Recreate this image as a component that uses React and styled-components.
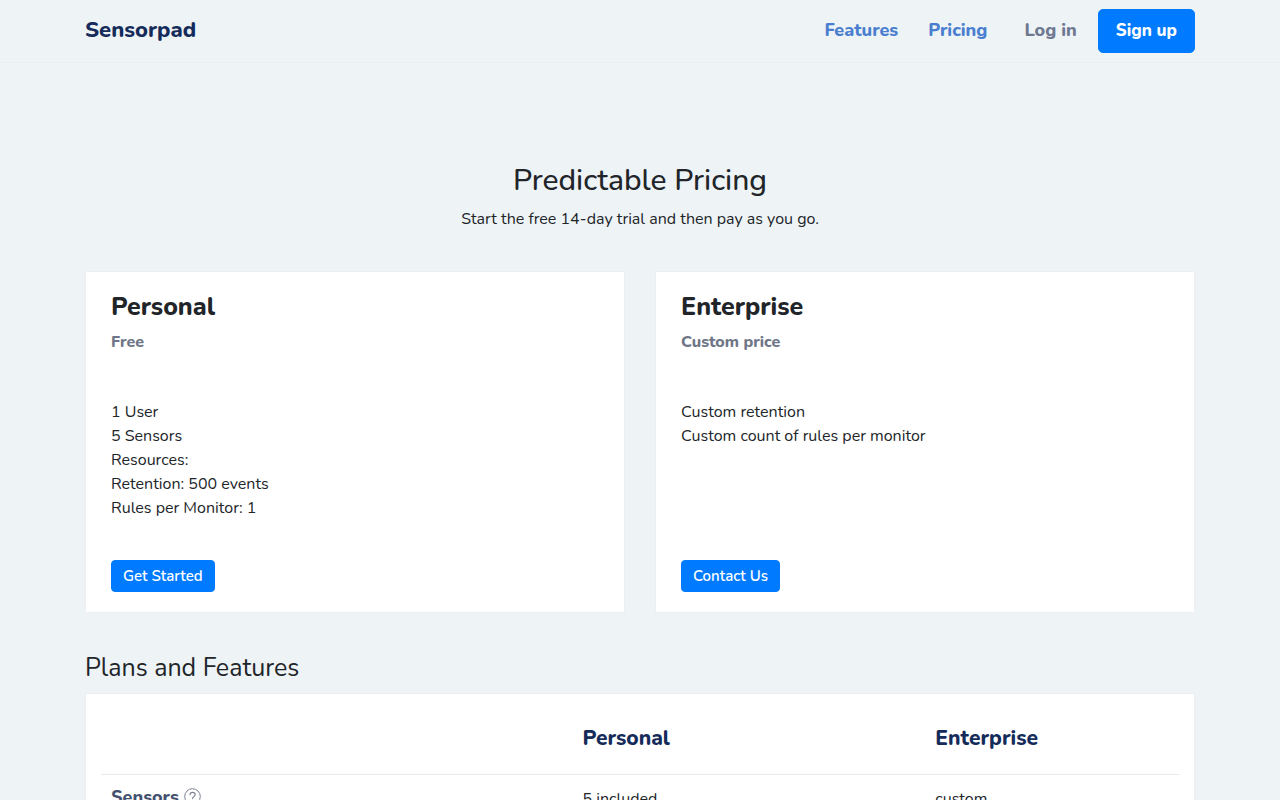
import styled, { createGlobalStyle } from "styled-components";

const GlobalStyle = createGlobalStyle`
  *,
  *::before,
  *::after {
    box-sizing: border-box;
  }
  body {
    margin: 0;
    background-color: #eef3f6;
    color: #212529;
    font-family: Nunito, Lato, "Open Sans", sans-serif;
    font-size: 16px;
    font-weight: 400;
    line-height: 24px;
  }
`;

const Container = styled.div`
  width: 100%;
  max-width: 1140px;
  margin: 0 auto;
  padding: 0 15px;
`;
const Header = styled.header`
  border-bottom: 1px solid #ebeff2;
`;
const Bar = styled(Container)`
  display: flex;
  align-items: center;
  justify-content: space-between;
  min-height: 62px;
`;
const Brand = styled.a`
  color: #152c5b;
  font-size: 22px;
  font-weight: 800;
  line-height: 32px;
  padding-bottom: 2px;
  text-decoration: none;
`;
const Nav = styled.nav`
  display: flex;
  align-items: center;
`;
const NavLink = styled.a`
  padding-bottom: 2px;
  color: ${(props) => (props.$muted ? "#6e7891" : "#4a7fd0")};
  font-size: 18px;
  font-weight: 800;
  margin-right: ${(props) => props.$gap}px;
  text-decoration: none;
`;
const Button = styled.button`
  align-self: flex-start;
  height: ${(props) => (props.$large ? 44 : 32)}px;
  padding: ${(props) => (props.$large ? "0 17px 2px" : "0 11px")};
  border: 1px solid #007bff;
  border-radius: ${(props) => (props.$large ? 5 : 4)}px;
  background-color: #007bff;
  color: white;
  font-family: inherit;
  font-size: ${(props) => (props.$large ? 17 : 15)}px;
  font-weight: ${(props) => (props.$large ? 800 : 600)};
  white-space: nowrap;
  cursor: pointer;
`;
const Intro = styled.section`
  padding: 98px 0 40px;
  text-align: center;
`;
const Title = styled.h1`
  margin: 0 0 6px;
  font-size: 30px;
  font-weight: 500;
  line-height: 40px;
`;
const Text = styled.p`
  margin: 0;
`;
const Plans = styled.section`
  display: grid;
  grid-template-columns: 1fr 1fr;
  gap: 30px;
`;
const Panel = styled.div`
  background-color: white;
  border: 1px solid #ebeef2;
`;
const Card = styled(Panel)`
  display: flex;
  flex-direction: column;
  padding: 20px 25px;
`;
const PlanName = styled.h2`
  margin: 0 0 8px;
  font-size: 25px;
  font-weight: 800;
  line-height: 30px;
`;
const Price = styled.p`
  margin: 0;
  color: #6e7687;
  font-weight: 800;
`;
const Perks = styled.ul`
  flex: 1;
  margin: 46px 0 40px;
  padding: 0;
  list-style: none;
`;
const SectionTitle = styled.h2`
  margin: 40px 0 10px;
  font-size: 25px;
  font-weight: 400;
  line-height: 30px;
`;
const TablePanel = styled(Panel)`
  padding: 14px 14px 14px 15px;
`;
const Table = styled.table`
  width: 100%;
  border-collapse: collapse;
  table-layout: fixed;
  text-align: left;
`;
const HeadCell = styled.th`
  width: ${(props) => props.$width};
  height: 66px;
  padding: 0 10px 5px;
  border-bottom: 1px solid #e9ecef;
  color: #152c5b;
  font-size: 21px;
  font-weight: 800;
`;
const RowHead = styled.th`
  padding: 10px 10px 12px;
  color: #45526f;
  font-size: 18px;
  font-weight: 800;
`;
const Cell = styled.td`
  padding: 12px 10px 10px;
`;
const FeatureLabel = styled.span`
  display: flex;
  align-items: center;
  gap: 5px;
`;

function HelpIcon() {
  return (
    <svg width="17" height="17" viewBox="0 0 17 17" fill="none" stroke="#7b8292">
      <circle cx="8.5" cy="8.5" r="7.8" />
      <path
        d="M6 6.8C6 5.3 7 4.4 8.6 4.4s2.6.9 2.6 2.2c0 1.9-2.6 1.9-2.6 3.8"
        strokeWidth="1.1"
        strokeLinecap="round"
      />
      <circle cx="8.6" cy="12.4" r=".4" fill="#7b8292" strokeWidth=".5" />
    </svg>
  );
}

function PlanCard({ name, price, perks, action }) {
  return (
    <Card>
      <PlanName>{name}</PlanName>
      <Price>{price}</Price>
      <Perks>
        {perks.map((perk) => (
          <li key={perk}>{perk}</li>
        ))}
      </Perks>
      <Button type="button">{action}</Button>
    </Card>
  );
}

const plans = [
  {
    name: "Personal",
    price: "Free",
    perks: [
      "1 User",
      "5 Sensors",
      "Resources:",
      "Retention: 500 events",
      "Rules per Monitor: 1",
    ],
    action: "Get Started",
  },
  {
    name: "Enterprise",
    price: "Custom price",
    perks: ["Custom retention", "Custom count of rules per monitor"],
    action: "Contact Us",
  },
];

function App() {
  return (
    <>
      <GlobalStyle />
      <Header>
        <Bar>
          <Brand href="#">Sensorpad</Brand>
          <Nav>
            <NavLink href="#features" $gap={30}>
              Features
            </NavLink>
            <NavLink href="#pricing" $gap={37}>
              Pricing
            </NavLink>
            <NavLink href="#login" $muted $gap={21}>
              Log in
            </NavLink>
            <Button type="button" $large>
              Sign up
            </Button>
          </Nav>
        </Bar>
      </Header>
      <Container as="main">
        <Intro>
          <Title>Predictable Pricing</Title>
          <Text>Start the free 14-day trial and then pay as you go.</Text>
        </Intro>
        <Plans>
          {plans.map((plan) => (
            <PlanCard key={plan.name} {...plan} />
          ))}
        </Plans>
        <SectionTitle>Plans and Features</SectionTitle>
        <TablePanel>
          <Table>
            <thead>
              <tr>
                <HeadCell as="td" $width="43.7%" />
                <HeadCell scope="col" $width="32.7%">
                  Personal
                </HeadCell>
                <HeadCell scope="col">Enterprise</HeadCell>
              </tr>
            </thead>
            <tbody>
              <tr>
                <RowHead scope="row">
                  <FeatureLabel>
                    Sensors
                    <HelpIcon />
                  </FeatureLabel>
                </RowHead>
                <Cell>5 included</Cell>
                <Cell>custom</Cell>
              </tr>
            </tbody>
          </Table>
        </TablePanel>
      </Container>
    </>
  );
}

export default App;
